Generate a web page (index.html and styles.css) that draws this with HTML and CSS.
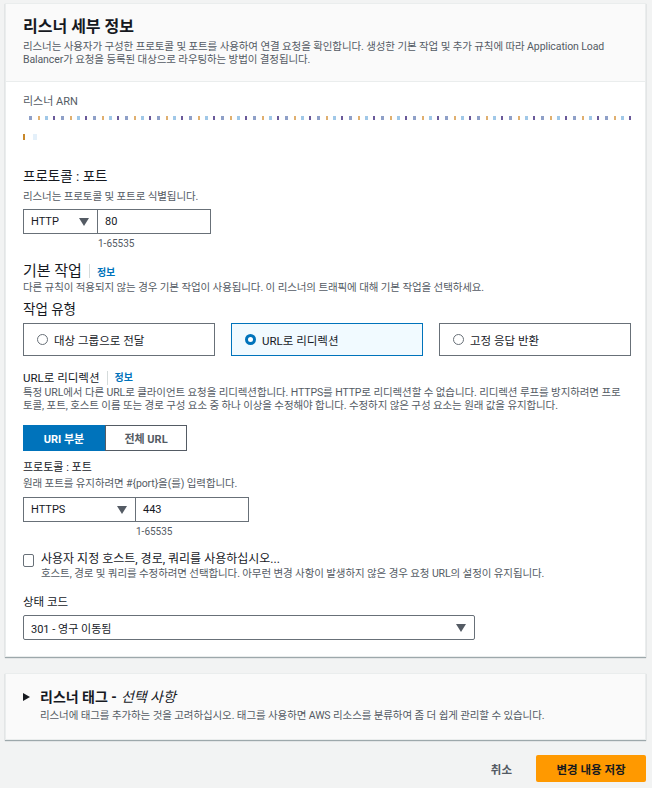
FILE: index.html
```html
<!DOCTYPE html>
<html lang="ko">
<head>
    <meta charset="UTF-8">
    <meta name="viewport" content="width=device-width, initial-scale=1.0">
    <title>리스너 편집</title>
    <link rel="stylesheet" href="styles.css">
</head>
<body>
    <div class="card">
        <div class="card-header">
            <h2>리스너 세부 정보</h2>
            <p class="desc">리스너는 사용자가 구성한 프로토콜 및 포트를 사용하여 연결 요청을 확인합니다. 생성한 기본 작업 및 추가 규칙에 따라 Application Load Balancer가 요청을 등록된 대상으로 라우팅하는 방법이 결정됩니다.</p>
        </div>
        <div class="card-body">
            <div class="arn">
                <div class="label-sm">리스너 ARN</div>
                <div class="arn-line"></div>
                <div class="arn-line short"></div>
            </div>

            <div class="field">
                <div class="label-md">프로토콜 : 포트</div>
                <p class="desc">리스너는 프로토콜 및 포트로 식별됩니다.</p>
                <div class="combo">
                    <div class="select sel-http">HTTP<span class="caret"></span></div>
                    <div class="input port-80">80</div>
                </div>
                <div class="hint hint-80">1-65535</div>
            </div>

            <div class="section-title">
                <span class="big">기본 작업</span><span class="sep"></span><a class="info">정보</a>
            </div>
            <p class="desc">다른 규칙이 적용되지 않는 경우 기본 작업이 사용됩니다. 이 리스너의 트래픽에 대해 기본 작업을 선택하세요.</p>

            <div class="label-type">작업 유형</div>
            <div class="tiles">
                <div class="tile"><span class="radio"></span>대상 그룹으로 전달</div>
                <div class="tile active"><span class="radio on"></span>URL로 리디렉션</div>
                <div class="tile"><span class="radio"></span>고정 응답 반환</div>
            </div>

            <div class="redirect">
                <div class="redirect-title">URL로 리디렉션<span class="sep"></span><a class="info">정보</a></div>
                <p class="desc">특정 URL에서 다른 URL로 클라이언트 요청을 리디렉션합니다. HTTPS를 HTTP로 리디렉션할 수 없습니다. 리디렉션 루프를 방지하려면 프로토콜, 포트, 호스트 이름 또는 경로 구성 요소 중 하나 이상을 수정해야 합니다. 수정하지 않은 구성 요소는 원래 값을 유지합니다.</p>

                <div class="segment">
                    <button class="seg on">URI 부분</button>
                    <button class="seg">전체 URL</button>
                </div>

                <div class="label-sm strong">프로토콜 : 포트</div>
                <p class="desc port-desc">원래 포트를 유지하려면 #{port}을(를) 입력합니다.</p>
                <div class="combo combo-https">
                    <div class="select sel-https">HTTPS<span class="caret"></span></div>
                    <div class="input port-443">443</div>
                </div>
                <div class="hint hint-443">1-65535</div>

                <div class="check-row">
                    <span class="checkbox"></span>
                    <div>
                        <div class="check-label">사용자 지정 호스트, 경로, 쿼리를 사용하십시오...</div>
                        <p class="desc">호스트, 경로 및 쿼리를 수정하려면 선택합니다. 아무런 변경 사항이 발생하지 않은 경우 요청 URL의 설정이 유지됩니다.</p>
                    </div>
                </div>

                <div class="label-status">상태 코드</div>
                <div class="select sel-status">301 - 영구 이동됨<span class="caret"></span></div>
            </div>
        </div>
    </div>

    <div class="card card-tags">
        <div class="tags-title"><span class="expand"></span>리스너 태그 - <em>선택 사항</em></div>
        <p class="desc tags-desc">리스너에 태그를 추가하는 것을 고려하십시오. 태그를 사용하면 AWS 리소스를 분류하여 좀 더 쉽게 관리할 수 있습니다.</p>
    </div>

    <div class="actions">
        <a class="cancel">취소</a>
        <button class="primary">변경 내용 저장</button>
    </div>
</body>
</html>
```
FILE: styles.css
```css
body {
    margin: 0;
    padding: 3px 6px 0 5px;
    background-color: #f2f3f3;
    font-family: Roboto, "Noto Sans CJK KR", sans-serif;
    color: #16191f;
    font-size: 11px;
}
p {
    margin: 0;
}
.card {
    background: white;
    border: 1px solid #eaeded;
    box-shadow: 0 1px 1px 0 rgba(0, 28, 36, 0.35);
}
.card-header {
    background: #fafafa;
    padding: 13px 17px 15px;
    border-bottom: 1px solid #eaeded;
}
h2 {
    margin: 0 0 3px;
    font-size: 16px;
    line-height: 20px;
    font-weight: 700;
}
.desc {
    color: #545b64;
    font-size: 10.5px;
    line-height: 13px;
    letter-spacing: -0.1px;
}
.card-body {
    padding: 12px 17px 16px;
}
.label-sm {
    font-size: 11px;
    line-height: 16px;
    color: #545b64;
}
.arn-line {
    margin-top: 6px;
    height: 4px;
    background: repeating-linear-gradient(90deg, #ffffff 0 6px, #8fa0c8 6px 9px, #ffffff 9px 15px, #e0b070 15px 17px, #ffffff 17px 22px, #a0c8e8 22px 25px, #ffffff 25px 30px, #6a5a9a 30px 32px);
    width: 612px;
}
.arn-line.short {
    margin-top: 14px;
    width: 40px;
    height: 6px;
    background: linear-gradient(90deg, #c8882a 0 2px, #ffffff 2px 10px, #e4f0fa 10px 14px, #ffffff 14px);
}
.field {
    margin-top: 27px;
}
.label-md {
    font-size: 13.5px;
    line-height: 18px;
}
.field .desc {
    margin-top: 5px;
}
.combo {
    display: flex;
    margin-top: 6px;
}
.combo-https {
    margin-top: 7px;
}
.select, .input {
    box-sizing: border-box;
    height: 25px;
    border: 1px solid #687078;
    display: flex;
    align-items: center;
    padding: 0 7px;
    font-size: 11px;
    position: relative;
    background: white;
}
.sel-http {
    width: 75px;
}
.port-80 {
    width: 114px;
    margin-left: -1px;
}
.sel-https {
    width: 113px;
}
.port-443 {
    width: 114px;
    margin-left: -1px;
}
.caret {
    position: absolute;
    right: 8px;
    top: 8px;
    width: 0;
    height: 0;
    border-left: 5px solid transparent;
    border-right: 5px solid transparent;
    border-top: 8px solid #545b64;
}
.hint {
    font-size: 10px;
    line-height: 14px;
    color: #545b64;
    margin-top: 3px;
}
.hint-80 {
    margin-left: 75px;
}
.hint-443 {
    margin-left: 113px;
}
.section-title {
    margin-top: 10px;
    display: flex;
    align-items: center;
}
.big {
    font-size: 15px;
    line-height: 20px;
}
.sep {
    display: inline-block;
    width: 1px;
    height: 14px;
    background: #d5dbdb;
    margin: 0 7px;
}
.info {
    color: #0073bb;
    font-weight: 700;
    font-size: 10px;
}
.label-type {
    margin-top: 6px;
    font-size: 13.5px;
    line-height: 18px;
}
.tiles {
    display: grid;
    grid-template-columns: repeat(3, 192px);
    gap: 16px;
    margin-top: 5px;
}
.tile {
    box-sizing: border-box;
    height: 33px;
    border: 1px solid #687078;
    display: flex;
    align-items: center;
    padding-left: 13px;
    font-size: 11.5px;
}
.tile.active {
    border-color: #0073bb;
    background: #f1faff;
}
.radio {
    box-sizing: border-box;
    width: 11px;
    height: 11px;
    border-radius: 50%;
    border: 1.2px solid #687078;
    margin-right: 6px;
}
.radio.on {
    border: 3px solid #0073bb;
    background: white;
}
.redirect {
    margin-top: 14px;
}
.redirect-title {
    display: flex;
    align-items: center;
    font-size: 11.5px;
    line-height: 16px;
}
.segment {
    display: flex;
    margin-top: 13px;
}
.seg {
    box-sizing: border-box;
    height: 26px;
    width: 82px;
    border: 1px solid #545b64;
    background: white;
    font-family: inherit;
    font-size: 11px;
    font-weight: 700;
    color: #545b64;
    padding: 0;
}
.seg.on {
    background: #0073bb;
    border-color: #0073bb;
    color: white;
}
.label-sm.strong {
    margin-top: 9px;
    color: #16191f;
}
.port-desc {
    margin-top: 1px;
}
.check-row {
    display: flex;
    margin-top: 12px;
}
.checkbox {
    box-sizing: border-box;
    width: 11px;
    height: 13px;
    border: 1.2px solid #687078;
    border-radius: 2px;
    margin: 3px 7px 0 0;
    flex-shrink: 0;
}
.check-label {
    font-size: 12px;
    line-height: 16px;
}
.label-status {
    margin-top: 14px;
    font-size: 11.5px;
    line-height: 16px;
}
.sel-status {
    margin-top: 5px;
    width: 452px;
    border-radius: 2px;
}
.card-tags {
    margin-top: 16px;
    background: #fafafa;
    padding: 13px 17px 17px;
}
.tags-title {
    display: flex;
    align-items: center;
    font-size: 14px;
    line-height: 20px;
    font-weight: 700;
}
.tags-title em {
    font-weight: 400;
    margin-left: 4px;
}
.expand {
    width: 0;
    height: 0;
    border-top: 4px solid transparent;
    border-bottom: 4px solid transparent;
    border-left: 7px solid #16191f;
    margin-right: 10px;
}
.tags-desc {
    margin-left: 17px;
    margin-top: 2px;
}
.actions {
    display: flex;
    justify-content: flex-end;
    align-items: center;
    margin-top: 15px;
}
.cancel {
    color: #545b64;
    font-weight: 700;
    font-size: 11.5px;
    margin-right: 24px;
}
.primary {
    background: #ff9900;
    border: none;
    border-radius: 2px;
    height: 27px;
    width: 110px;
    font-family: inherit;
    font-weight: 700;
    font-size: 11.5px;
    color: #16191f;
}
```
